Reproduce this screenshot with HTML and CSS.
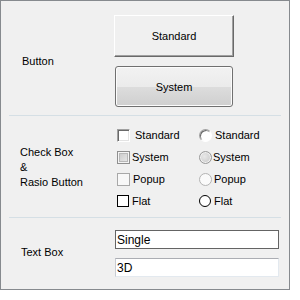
FILE: index.html
```html
<!DOCTYPE html>
<html lang="en">
<head>
    <meta charset="UTF-8">
    <meta name="viewport" content="width=device-width, initial-scale=1.0">
    <title>Controls</title>
    <link rel="stylesheet" href="styles.css">
</head>
<body>
    <div class="panel">
        <!-- Buttons -->
        <section class="group group-buttons">
            <div class="label">Button</div>
            <div class="controls">
                <button class="btn btn-standard">Standard</button>
                <button class="btn btn-system">System</button>
            </div>
        </section>

        <!-- Check boxes and radio buttons -->
        <section class="group group-checks">
            <div class="label label-multi">Check Box<br>&amp;<br>Rasio Button</div>
            <div class="options">
                <label class="opt"><span class="check check-standard"></span>Standard</label>
                <label class="opt"><span class="radio radio-standard"></span>Standard</label>
                <label class="opt"><span class="check check-system"></span>System</label>
                <label class="opt"><span class="radio radio-system"></span>System</label>
                <label class="opt"><span class="check check-popup"></span>Popup</label>
                <label class="opt"><span class="radio radio-popup"></span>Popup</label>
                <label class="opt"><span class="check check-flat"></span>Flat</label>
                <label class="opt"><span class="radio radio-flat"></span>Flat</label>
            </div>
        </section>

        <!-- Text boxes -->
        <section class="group group-text">
            <div class="label label-text">Text Box</div>
            <div class="controls">
                <input type="text" class="field field-single" value="Single">
                <input type="text" class="field field-3d" value="3D">
            </div>
        </section>
    </div>
</body>
</html>
```

FILE: styles.css
```css
body {
    margin: 0;
    padding: 0;
    background-color: #fff;
    font-family: "Liberation Sans", Arial, sans-serif;
    font-size: 11px;
    color: #000;
}

.panel {
    width: 290px;
    height: 290px;
    box-sizing: border-box;
    border: 1px solid #868a8e;
    background-color: #f0f0f0;
    padding: 0 8px;
}

.group {
    display: grid;
    grid-template-columns: 105px 1fr;
    align-items: center;
    border-bottom: 1px solid #d5dfe5;
}

.group:last-child {
    border-bottom: none;
}

.label {
    padding-left: 12px;
}

.label-multi {
    padding-left: 11px;
    line-height: 15px;
}

.label-text {
    margin-top: -3px;
}

/* Buttons */
.group-buttons {
    height: 115px;
    padding: 14px 0 9px;
    box-sizing: border-box;
}

.group-buttons .label {
    padding-left: 13px;
}

.btn {
    display: block;
    margin: 0;
    padding: 0;
    font-family: inherit;
    font-size: 11px;
    color: #000;
}

.btn-standard {
    width: 120px;
    height: 42px;
    background-color: #f0f0f0;
    border: 1px solid;
    border-color: #fff #696969 #696969 #fff;
    box-shadow: inset -1px -1px 0 #a0a0a0, inset 1px 1px 0 #f0f0f0;
}

.btn-system {
    width: 118px;
    height: 41px;
    margin: 9px 0 0 1px;
    border: 1px solid #707070;
    border-radius: 3px;
    background: linear-gradient(#f2f2f2 0%, #ebebeb 50%, #dddddd 50%, #cfcfcf 100%);
    box-shadow: inset 0 0 0 1px #fcfcfc;
}

/* Check boxes and radio buttons */
.group-checks {
    height: 102px;
    padding: 8px 0 5px;
    box-sizing: border-box;
}

.group-checks .label {
    margin-top: -2px;
}

.options {
    display: grid;
    grid-template-columns: 82px 1fr;
    grid-auto-rows: 22px;
    padding-left: 3px;
}

.opt {
    display: flex;
    align-items: center;
}

.check,
.radio {
    display: inline-block;
    box-sizing: border-box;
    flex-shrink: 0;
}

.check {
    width: 13px;
    height: 13px;
    margin-right: 3px;
}

.check-standard {
    border: 1px solid;
    border-color: #a0a0a0 #fff #fff #a0a0a0;
    background-color: #fff;
    box-shadow: inset 1px 1px 0 #696969, inset -1px -1px 0 #e3e3e3;
    margin-right: 5px;
}

.check-system {
    border: 1px solid #8f8f8f;
    background: linear-gradient(135deg, #c6c6c6, #ececec);
    box-shadow: inset 0 0 0 1px #f4f4f4, inset 0 0 0 2px #b8b8b8;
    margin-right: 2px;
}

.check-popup {
    border: 1px solid #a8a8a8;
    background-color: #f8f8f8;
}

.check-flat {
    width: 12px;
    height: 12px;
    border: 1px solid #000;
    background-color: #fff;
}

.radio {
    width: 13px;
    height: 13px;
    border-radius: 50%;
    margin-right: 2px;
}

.radio-standard {
    border: 1px solid;
    border-color: #a0a0a0 #fff #fff #a0a0a0;
    background-color: #fff;
    box-shadow: inset 1px 1px 0 #696969;
    margin-right: 3px;
}

.radio-system {
    border: 1px solid #9a9a9a;
    background: radial-gradient(circle at 40% 40%, #e8e8e8, #c4c4c4);
    box-shadow: inset 0 0 0 1px #f2f2f2;
    margin-right: 1px;
}

.radio-popup {
    border: 1px solid #b4b4b4;
    background-color: #fafafa;
}

.radio-flat {
    width: 12px;
    height: 12px;
    border: 1px solid #000;
    background-color: #fff;
    margin-right: 3px;
}

/* Text boxes */
.group-text {
    height: 70px;
    padding: 12px 0 11px;
    box-sizing: border-box;
}

.field {
    display: block;
    box-sizing: border-box;
    width: 164px;
    height: 19px;
    margin: 0 0 0 1px;
    padding: 0 0 0 1px;
    background-color: #fff;
    font-family: "Liberation Sans", Arial, sans-serif;
    font-size: 12px;
    color: #000;
    outline: none;
}

.field-single {
    border: 1px solid #646464;
}

.field-3d {
    margin-top: 9px;
    border: 1px solid;
    border-color: #abadb3 #e3e9ef #e3e9ef #c8ccd2;
}
```
